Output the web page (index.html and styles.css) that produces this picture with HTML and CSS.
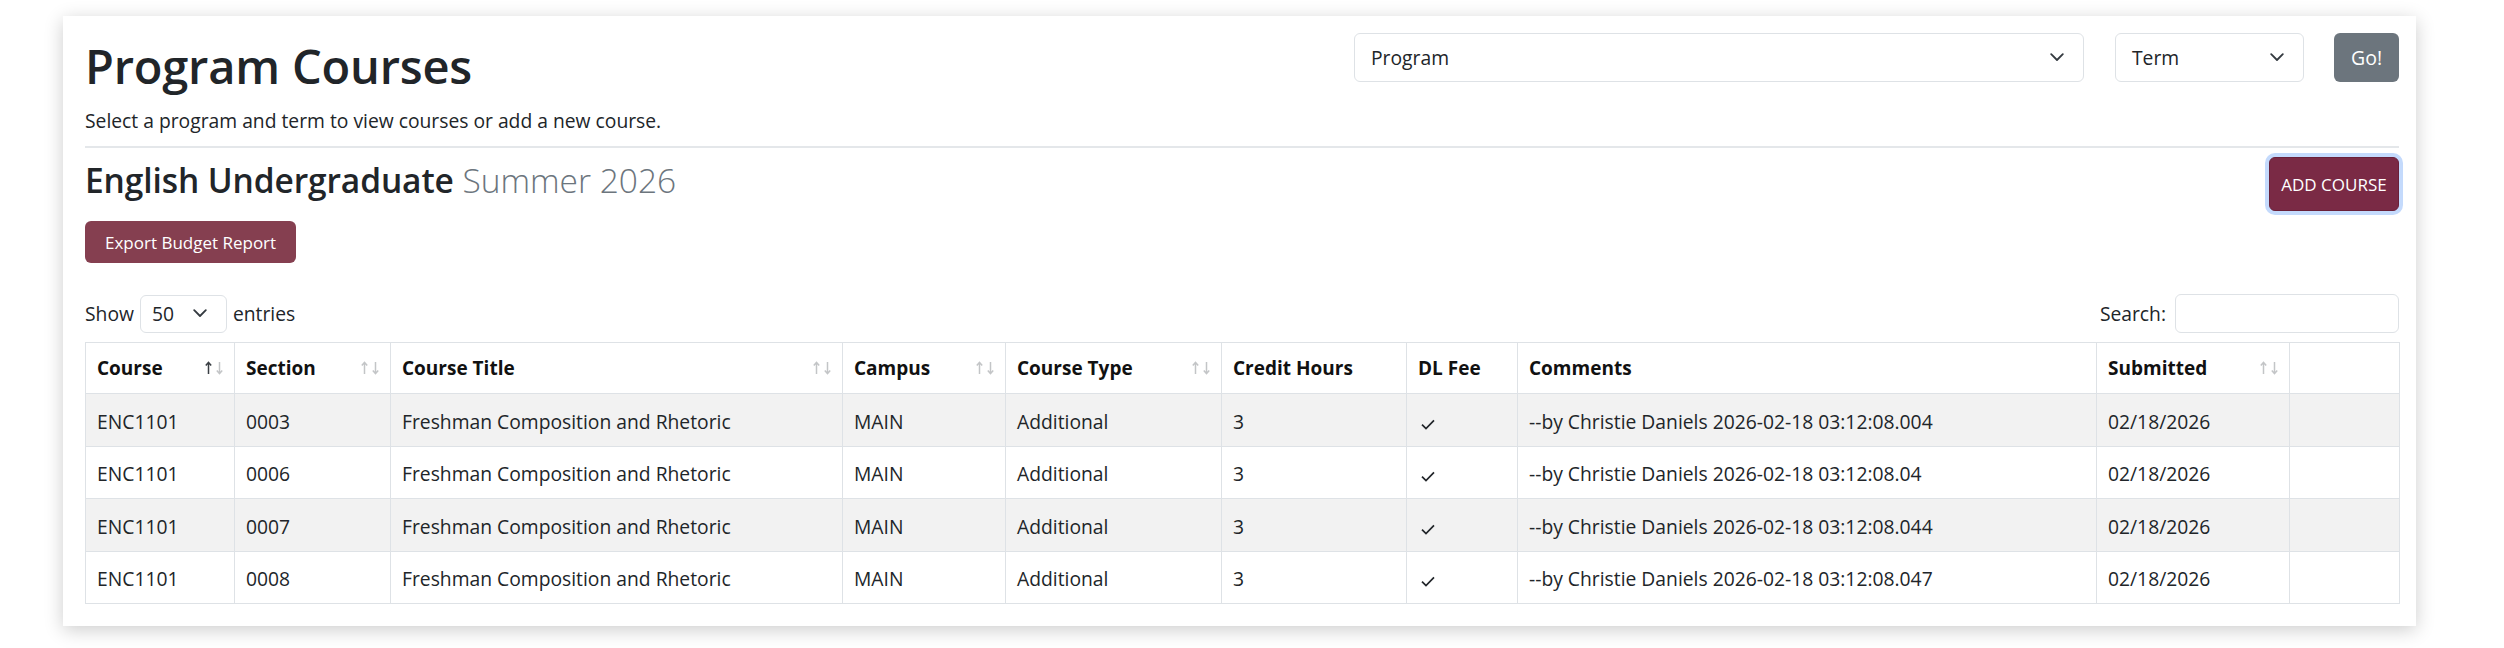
FILE: index.html
```html
<!DOCTYPE html>
<html lang="en">
<head>
<meta charset="utf-8">
<title>Program Courses</title>
<link rel="stylesheet" href="styles.css">
</head>
<body>
<div class="card">
  <div class="top">
    <div class="intro">
      <h1 class="title">Program Courses</h1>
      <p class="lead">Select a program and term to view courses or add a new course.</p>
    </div>
    <div class="filters">
      <div class="select program"><span>Program</span><svg class="chev" width="14" height="9" viewBox="0 0 14 9"><path d="M1.2 1.2 L7 7 L12.8 1.2" /></svg></div>
      <div class="select term"><span>Term</span><svg class="chev" width="14" height="9" viewBox="0 0 14 9"><path d="M1.2 1.2 L7 7 L12.8 1.2" /></svg></div>
      <button class="btn-go">Go!</button>
    </div>
  </div>
  <hr class="rule">
  <div class="heading-row">
    <h3 class="program-name">English Undergraduate <span class="term-name">Summer 2026</span></h3>
    <button class="btn-add">ADD COURSE</button>
  </div>
  <button class="btn-export">Export Budget Report</button>
  <div class="dt-controls">
    <div class="length">Show <div class="select small"><span>50</span><svg class="chev" width="14" height="9" viewBox="0 0 14 9"><path d="M1.2 1.2 L7 7 L12.8 1.2" /></svg></div> entries</div>
    <div class="search">Search: <div class="search-input"></div></div>
  </div>
  <table class="courses">
    <colgroup>
      <col style="width:149px"><col style="width:156px"><col style="width:452px"><col style="width:163px"><col style="width:216px"><col style="width:185px"><col style="width:111px"><col style="width:579px"><col style="width:193px"><col style="width:110px">
    </colgroup>
    <thead>
      <tr>
        <th><div class="th-in"><span>Course</span><svg class="sort asc" width="18" height="14" viewBox="0 0 18 14"><path class="up" d="M3.5 13 V1.5 M0.8 4.5 L3.5 1.3 L6.2 4.5"/><path class="down" d="M14.5 1 V12.5 M11.8 9.5 L14.5 12.7 L17.2 9.5"/></svg></div></th>
        <th><div class="th-in"><span>Section</span><svg class="sort" width="18" height="14" viewBox="0 0 18 14"><path class="up" d="M3.5 13 V1.5 M0.8 4.5 L3.5 1.3 L6.2 4.5"/><path class="down" d="M14.5 1 V12.5 M11.8 9.5 L14.5 12.7 L17.2 9.5"/></svg></div></th>
        <th><div class="th-in"><span>Course Title</span><svg class="sort" width="18" height="14" viewBox="0 0 18 14"><path class="up" d="M3.5 13 V1.5 M0.8 4.5 L3.5 1.3 L6.2 4.5"/><path class="down" d="M14.5 1 V12.5 M11.8 9.5 L14.5 12.7 L17.2 9.5"/></svg></div></th>
        <th><div class="th-in"><span>Campus</span><svg class="sort" width="18" height="14" viewBox="0 0 18 14"><path class="up" d="M3.5 13 V1.5 M0.8 4.5 L3.5 1.3 L6.2 4.5"/><path class="down" d="M14.5 1 V12.5 M11.8 9.5 L14.5 12.7 L17.2 9.5"/></svg></div></th>
        <th><div class="th-in"><span>Course Type</span><svg class="sort" width="18" height="14" viewBox="0 0 18 14"><path class="up" d="M3.5 13 V1.5 M0.8 4.5 L3.5 1.3 L6.2 4.5"/><path class="down" d="M14.5 1 V12.5 M11.8 9.5 L14.5 12.7 L17.2 9.5"/></svg></div></th>
        <th><div class="th-in"><span>Credit Hours</span></div></th>
        <th><div class="th-in"><span>DL Fee</span></div></th>
        <th><div class="th-in"><span>Comments</span></div></th>
        <th><div class="th-in"><span>Submitted</span><svg class="sort" width="18" height="14" viewBox="0 0 18 14"><path class="up" d="M3.5 13 V1.5 M0.8 4.5 L3.5 1.3 L6.2 4.5"/><path class="down" d="M14.5 1 V12.5 M11.8 9.5 L14.5 12.7 L17.2 9.5"/></svg></div></th>
        <th></th>
      </tr>
    </thead>
    <tbody>
      <tr>
        <td>ENC1101</td><td>0003</td><td>Freshman Composition and Rhetoric</td><td>MAIN</td><td>Additional</td><td>3</td>
        <td><svg class="check" width="14" height="11" viewBox="0 0 14 11"><path d="M1 5.6 L5 9.6 L13 1.4"/></svg></td>
        <td>--by Christie Daniels 2026-02-18 03:12:08.004</td><td>02/18/2026</td><td></td>
      </tr>
      <tr>
        <td>ENC1101</td><td>0006</td><td>Freshman Composition and Rhetoric</td><td>MAIN</td><td>Additional</td><td>3</td>
        <td><svg class="check" width="14" height="11" viewBox="0 0 14 11"><path d="M1 5.6 L5 9.6 L13 1.4"/></svg></td>
        <td>--by Christie Daniels 2026-02-18 03:12:08.04</td><td>02/18/2026</td><td></td>
      </tr>
      <tr>
        <td>ENC1101</td><td>0007</td><td>Freshman Composition and Rhetoric</td><td>MAIN</td><td>Additional</td><td>3</td>
        <td><svg class="check" width="14" height="11" viewBox="0 0 14 11"><path d="M1 5.6 L5 9.6 L13 1.4"/></svg></td>
        <td>--by Christie Daniels 2026-02-18 03:12:08.044</td><td>02/18/2026</td><td></td>
      </tr>
      <tr>
        <td>ENC1101</td><td>0008</td><td>Freshman Composition and Rhetoric</td><td>MAIN</td><td>Additional</td><td>3</td>
        <td><svg class="check" width="14" height="11" viewBox="0 0 14 11"><path d="M1 5.6 L5 9.6 L13 1.4"/></svg></td>
        <td>--by Christie Daniels 2026-02-18 03:12:08.047</td><td>02/18/2026</td><td></td>
      </tr>
    </tbody>
  </table>
</div>
</body>
</html>
```

FILE: styles.css
```css
html, body {
  margin: 0;
  padding: 0;
  background: #ffffff;
}

body {
  width: 2504px;
  height: 648px;
  overflow: hidden;
  padding-top: 16px;
  box-sizing: border-box;
}

.card {
  margin: 0 88px 0 63px;
  padding: 17px 17px 22px 22px;
  background: #ffffff;
  box-shadow: 0 4px 18px rgba(0, 0, 0, 0.2);
  font-family: "Open Sans", "Noto Sans", sans-serif;
  font-size: 19.3px;
  color: #212529;
}

.top {
  display: flex;
  justify-content: space-between;
  align-items: flex-start;
  height: 113px;
}

.title {
  margin: 3px 0 0;
  font-size: 47px;
  font-weight: 600;
  line-height: 60px;
  color: #212529;
  letter-spacing: -0.2px;
}

.lead {
  margin: 11px 0 0;
  line-height: 28px;
}

.filters {
  display: flex;
  align-items: flex-start;
}

.select {
  box-sizing: border-box;
  height: 49px;
  border: 1px solid #dee2e6;
  border-radius: 6px;
  background: #fff;
  display: flex;
  align-items: center;
  justify-content: space-between;
  padding: 0 19px 0 16px;
}

.select.program {
  width: 730px;
}

.select.term {
  width: 189px;
  margin-left: 31px;
}

.chev path {
  fill: none;
  stroke: #343a40;
  stroke-width: 1.8;
  stroke-linecap: round;
  stroke-linejoin: round;
}

.btn-go {
  margin-left: 30px;
  width: 65px;
  height: 49px;
  border: none;
  border-radius: 6px;
  background: #6c757d;
  color: #fff;
  font-family: inherit;
  font-size: 19.5px;
  padding: 0;
}

.rule {
  margin: 0;
  border: none;
  border-top: 2px solid #e4e7ea;
  height: 0;
}

.heading-row {
  display: flex;
  justify-content: space-between;
  align-items: flex-start;
  height: 63px;
}

.program-name {
  margin: 11px 0 0;
  font-size: 33.5px;
  font-weight: 600;
  line-height: 42px;
  color: #212529;
  letter-spacing: -0.1px;
}

.term-name {
  font-weight: 300;
  color: #6c757d;
  letter-spacing: 0;
}

.btn-add {
  margin-top: 9px;
  width: 130px;
  height: 54px;
  border: 1px solid #6a2039;
  border-radius: 6px;
  background: #7a2a45;
  color: #fff;
  font-family: inherit;
  font-size: 17px;
  padding: 0;
  box-shadow: 0 0 0 4px #c4dafc;
}

.btn-export {
  display: block;
  margin-top: 10px;
  height: 42px;
  padding: 0 20px;
  border: none;
  border-radius: 6px;
  background: #853f50;
  color: #fff;
  font-family: inherit;
  font-size: 17px;
}

.dt-controls {
  margin-top: 31px;
  height: 39px;
  display: flex;
  justify-content: space-between;
  align-items: center;
}

.length, .search {
  display: flex;
  align-items: center;
  gap: 6px;
}

.search {
  gap: 9px;
}

.select.small {
  width: 87px;
  height: 38px;
  padding: 0 19px 0 11px;
}

.search-input {
  box-sizing: border-box;
  width: 224px;
  height: 39px;
  border: 1px solid #dee2e6;
  border-radius: 6px;
}

.courses {
  margin-top: 9px;
  width: 100%;
  table-layout: fixed;
  border-collapse: collapse;
}

.courses th, .courses td {
  border: 1px solid #dee2e6;
  padding: 0 11px 0 11px;
  text-align: left;
  white-space: nowrap;
}

.courses thead tr {
  height: 51px;
}

.courses tbody tr {
  height: 52.5px;
}

.courses th {
  font-weight: 700;
  font-size: 19px;
  color: #111;
  vertical-align: middle;
}

.courses td {
  vertical-align: middle;
  padding-top: 3px;
}

.courses tbody tr:nth-child(odd) td {
  background: #f2f2f2;
}

.th-in {
  display: flex;
  align-items: center;
  justify-content: space-between;
}

.sort path {
  fill: none;
  stroke: #c3c5c7;
  stroke-width: 1.5;
}

.sort.asc path.up {
  stroke: #3a3f44;
}

.check {
  margin-left: 3px;
  vertical-align: -1px;
}

.check path {
  fill: none;
  stroke: #212529;
  stroke-width: 1.7;
}
```
